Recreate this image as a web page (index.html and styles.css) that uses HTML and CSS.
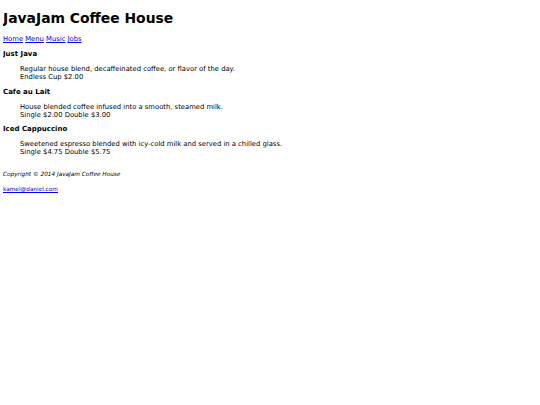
FILE: index.html
```html
<!DOCTYPE html>
<html lang="en">
<head>
<meta charset="utf-8">
<title>JavaJam Coffee House</title>
<link rel="stylesheet" href="styles.css">
</head>
<body>
<header class="site-header">
  <h1 class="title">JavaJam Coffee House</h1>
</header>
<nav class="nav">
  <a href="#">Home</a> <a href="#">Menu</a> <a href="#">Music</a> <a href="#">Jobs</a>
</nav>
<main>
  <dl class="menu">
    <dt>Just Java</dt>
    <dd>Regular house blend, decaffeinated coffee, or flavor of the day.<br>Endless Cup $2.00</dd>
    <dt>Cafe au Lait</dt>
    <dd>House blended coffee infused into a smooth, steamed milk.<br>Single $2.00 Double $3.00</dd>
    <dt>Iced Cappuccino</dt>
    <dd>Sweetened espresso blended with icy-cold milk and served in a chilled glass.<br>Single $4.75 Double $5.75</dd>
  </dl>
</main>
<footer class="footer">
  <small class="copy"><i>Copyright &copy; 2014 JavaJam Coffee House</i></small>
  <a class="email" href="#">kamel@daniel.com</a>
</footer>
</body>
</html>
```
FILE: styles.css
```css
html, body {
  background: #fff;
}
body {
  margin: 3px;
  font-family: "DejaVu Sans", Verdana, sans-serif;
  font-size: 6.8px;
  line-height: 8px;
  color: #000;
}
.title {
  margin: 0;
  padding-top: 7px;
  font-size: 13.9px;
  line-height: 16px;
  font-weight: bold;
}
.nav {
  margin-top: 9px;
  font-size: 6.8px;
}
.nav a {
  color: #0000ee;
}
.menu {
  margin: 7px 0 0;
}
.menu dt {
  font-weight: bold;
  font-size: 7px;
  margin-top: 6.5px;
}
.menu dt:first-child {
  margin-top: 0;
}
.menu dd {
  margin: 7px 0 0 17px;
}
.footer {
  margin-top: 13.5px;
}
.copy {
  display: block;
  font-size: 5.75px;
}
.email {
  display: block;
  margin-top: 7px;
  font-size: 5.75px;
  color: #0000ee;
}
```
